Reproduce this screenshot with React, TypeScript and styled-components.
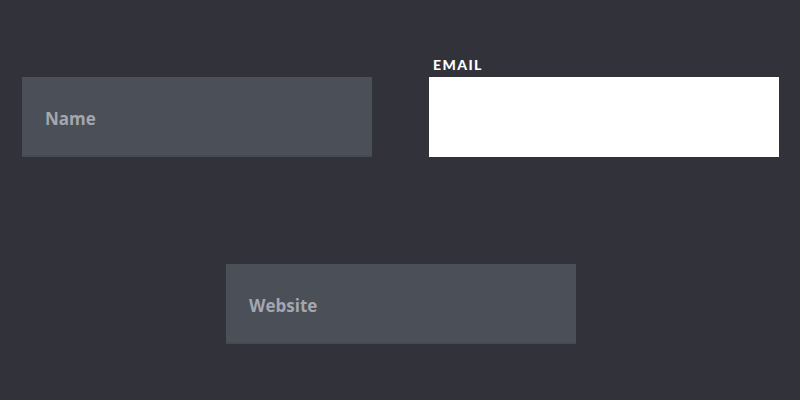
import React from "react";
import styled, { createGlobalStyle } from "styled-components";

const Global = createGlobalStyle`
  html, body {
    margin: 0;
    padding: 0;
    background: #32323b;
  }
  body {
    font-family: Lato, "Open Sans", sans-serif;
  }
`;

const Page = styled.div`
  width: 800px;
  height: 400px;
  box-sizing: border-box;
  padding: 57px 21px 0 22px;
  display: flex;
  flex-direction: column;
  gap: 87px;
`;

const Row = styled.div<{ $center?: boolean }>`
  display: flex;
  justify-content: ${(p) => (p.$center ? "center" : "space-between")};
  padding-left: ${(p) => (p.$center ? "1px" : "0")};
`;

const Field = styled.label`
  width: 350px;
  display: flex;
  flex-direction: column;
`;

const Caption = styled.span<{ $show?: boolean }>`
  height: 20px;
  padding-left: 4px;
  font-size: 14px;
  font-weight: 900;
  letter-spacing: 1.4px;
  line-height: 16px;
  color: #ffffff;
  visibility: ${(p) => (p.$show ? "visible" : "hidden")};
`;

const Input = styled.input<{ $active?: boolean }>`
  box-sizing: border-box;
  width: 350px;
  height: 80px;
  border: 0;
  border-bottom: 2px solid ${(p) => (p.$active ? "#ffffff" : "#464b53")};
  outline: 0;
  padding: 4px 23px 0;
  font-family: "Open Sans", Lato, sans-serif;
  font-size: 17px;
  font-weight: 700;
  background: ${(p) => (p.$active ? "#ffffff" : "#4a4f58")};
  color: #333;

  &::placeholder {
    color: #a4a7ad;
  }
`;

const App = () => {
  return (
    <>
      <Global />
      <Page>
        <Row>
          <Field>
            <Caption>NAME</Caption>
            <Input type="text" placeholder="Name" />
          </Field>
          <Field>
            <Caption $show>EMAIL</Caption>
            <Input type="email" $active />
          </Field>
        </Row>
        <Row $center>
          <Field>
            <Caption>WEBSITE</Caption>
            <Input type="text" placeholder="Website" />
          </Field>
        </Row>
      </Page>
    </>
  );
};

export default App;
